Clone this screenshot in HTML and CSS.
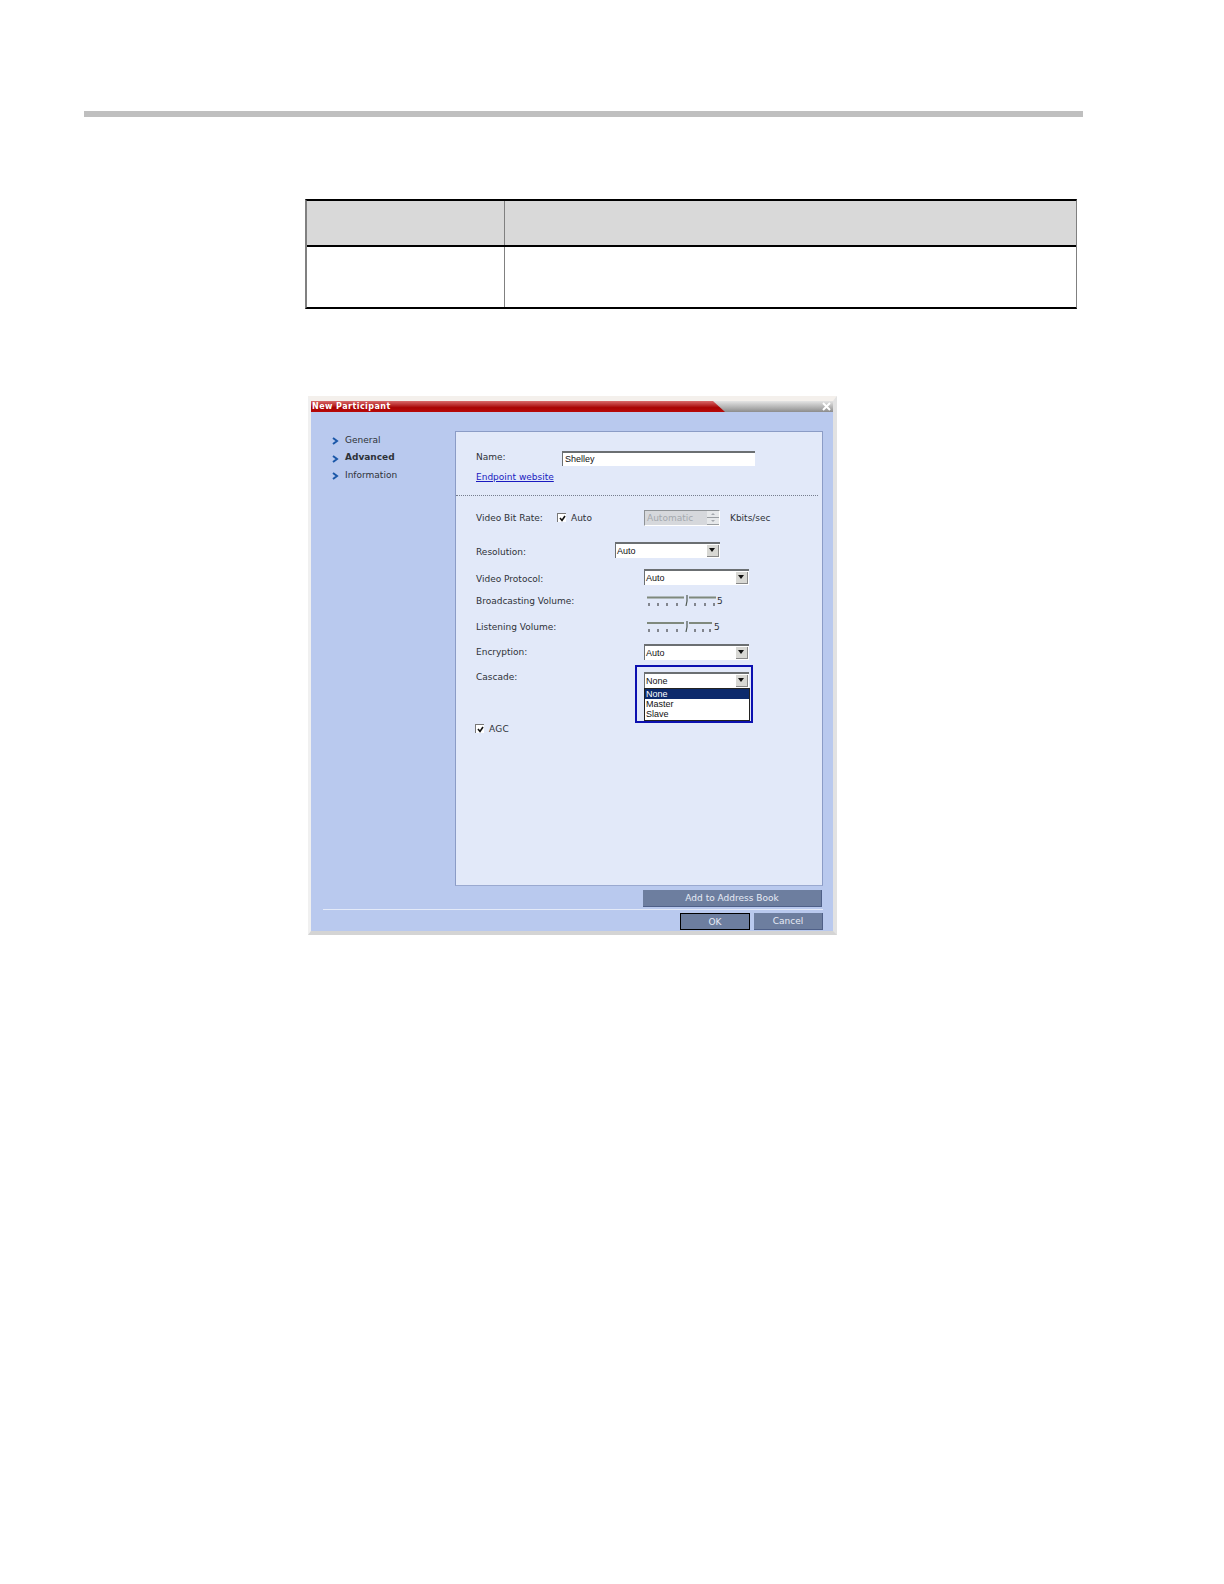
FILE: index.html
```html
<!DOCTYPE html>
<html lang="en">
<head>
    <meta charset="UTF-8">
    <title>New Participant</title>
    <link rel="stylesheet" href="styles.css">
</head>
<body>
    <div class="top-rule"></div>

    <div class="doc-table">
        <div class="doc-head">
            <div class="doc-col-a"></div>
            <div class="doc-col-b"></div>
        </div>
        <div class="doc-row">
            <div class="doc-col-a"></div>
            <div class="doc-col-b"></div>
        </div>
    </div>

    <div class="dialog">
        <div class="title-bar">
            <div class="title-red">New Participant</div>
            <svg class="title-close" width="9" height="9" viewBox="0 0 9 9"><path d="M1 1l7 7M8 1l-7 7" stroke="#fff" stroke-width="2"/></svg>
        </div>

        <div class="dialog-main">
            <ul class="side-nav">
                <li><svg class="chev" width="7" height="8" viewBox="0 0 7 8"><path d="M1 1l4 3-4 3" fill="none" stroke="#1a57a8" stroke-width="2"/></svg>General</li>
                <li class="active"><svg class="chev" width="7" height="8" viewBox="0 0 7 8"><path d="M1 1l4 3-4 3" fill="none" stroke="#1a57a8" stroke-width="2"/></svg>Advanced</li>
                <li><svg class="chev" width="7" height="8" viewBox="0 0 7 8"><path d="M1 1l4 3-4 3" fill="none" stroke="#1a57a8" stroke-width="2"/></svg>Information</li>
            </ul>

            <div class="panel">
                <div class="panel-top">
                    <div class="name-row">
                        <span class="name-label">Name:</span>
                        <div class="text-input">Shelley</div>
                    </div>
                    <a class="endpoint-link" href="#">Endpoint website</a>
                </div>

                <div class="row bitrate-row">
                    <span class="bitrate-label">Video Bit Rate:</span>
                    <span class="check"><svg width="7" height="7" viewBox="0 0 7 7"><path d="M1 3l2 2.500 3-4.500" fill="none" stroke="#111" stroke-width="1.600"/></svg></span>
                    <span class="auto-label">Auto</span>
                    <div class="spinner">
                        <span class="spinner-text">Automatic</span>
                        <span class="spinner-btns"><i class="spin-up"></i><i class="spin-down"></i></span>
                    </div>
                    <span class="unit">Kbits/sec</span>
                </div>

                <div class="row resolution-row">
                    <span class="short-label low-label">Resolution:</span>
                    <div class="select"><span>Auto</span><b class="drop-btn"></b></div>
                </div>

                <div class="row protocol-row">
                    <span class="label low-label">Video Protocol:</span>
                    <div class="select"><span>Auto</span><b class="drop-btn"></b></div>
                </div>

                <div class="row broadcast-row">
                    <span class="label">Broadcasting Volume:</span>
                    <svg class="slider" width="72" height="15" viewBox="0 0 72 15">
                        <path d="M3 4.500h37M45 4.500h27" stroke="#7f897d" stroke-width="2"/>
                        <path d="M5 10v3M14 10v3M23 10v3M33 10v3M51 10v3M61 10v3M70 10v3" stroke="#222" stroke-width="1"/>
                        <path d="M43 2v6l-1 5" fill="none" stroke="#4e5850" stroke-width="1.200"/>
                    </svg>
                    <span class="slider-val">5</span>
                </div>

                <div class="row listen-row">
                    <span class="label">Listening Volume:</span>
                    <svg class="slider" width="68" height="15" viewBox="0 0 68 15">
                        <path d="M3 4h37M45 4h23" stroke="#7f897d" stroke-width="2"/>
                        <path d="M5 10v3M14 10v3M23 10v3M33 10v3M51 10v3M59 10v3M66 10v3" stroke="#222" stroke-width="1"/>
                        <path d="M43 2v6l-1 5" fill="none" stroke="#4e5850" stroke-width="1.200"/>
                    </svg>
                    <span class="slider-val">5</span>
                </div>

                <div class="row encryption-row">
                    <span class="label">Encryption:</span>
                    <div class="select"><span>Auto</span><b class="drop-btn"></b></div>
                </div>

                <div class="row cascade-row">
                    <span class="label cascade-label">Cascade:</span>
                    <div class="select cascade-select">
                        <span>None</span><b class="drop-btn"></b>
                        <div class="callout"></div>
                        <ul class="drop-list">
                            <li class="selected">None</li>
                            <li>Master</li>
                            <li>Slave</li>
                        </ul>
                    </div>
                </div>

                <div class="row agc-row">
                    <span class="check"><svg width="7" height="7" viewBox="0 0 7 7"><path d="M1 3l2 2.500 3-4.500" fill="none" stroke="#111" stroke-width="1.600"/></svg></span>
                    <span class="agc-label">AGC</span>
                </div>
            </div>
        </div>

        <div class="address-row">
            <div class="btn btn-address">Add to Address Book</div>
        </div>
        <div class="footer">
            <div class="btn btn-ok">OK</div>
            <div class="btn btn-cancel">Cancel</div>
        </div>
    </div>
</body>
</html>
```

FILE: styles.css
```css
body {
    margin: 0;
    background-color: #fff;
    font-family: "DejaVu Sans", sans-serif;
    font-size: 9px;
    color: #2e3238;
}

.top-rule {
    height: 6px;
    margin: 111px 0 0 84px;
    width: 999px;
    background-color: #bfbfbf;
}

/* empty table above the dialog */
.doc-table {
    margin: 82px 0 0 305px;
    width: 772px;
    box-sizing: border-box;
    border-top: 2px solid #000;
    border-bottom: 2px solid #000;
    border-left: 2px solid #808080;
    border-right: 1px solid #808080;
}

.doc-head {
    display: flex;
    height: 44px;
    background-color: #d9d9d9;
    border-bottom: 2px solid #000;
}

.doc-row {
    display: flex;
    height: 60px;
}

.doc-col-a {
    width: 197px;
    border-right: 1px solid #808080;
}

.doc-col-b {
    flex: 1;
}

/* dialog */
.dialog {
    margin: 87px 0 0 308px;
    width: 529px;
    height: 539px;
    box-sizing: border-box;
    background-color: #b9c9ee;
    border-top: 5px solid #f4f0ec;
    border-left: 3px solid #f0f0f0;
    border-right: 4px solid #e2e2e2;
    border-bottom: 4px solid #d4d4d4;
}

.title-bar {
    position: relative;
    height: 11px;
    background: linear-gradient(to bottom, #e4e4e4, #a8a8a8 70%, #8c8c8c);
}

.title-red {
    width: 414px;
    height: 11px;
    line-height: 11px;
    padding-left: 1px;
    box-sizing: border-box;
    background: linear-gradient(to bottom, #d86a6a, #a80404 60%, #b80808);
    clip-path: polygon(0 0, 402px 0, 100% 100%, 0 100%);
    color: #fff;
    font-weight: bold;
    font-size: 8px;
    letter-spacing: 0.45px;
}

.title-close {
    position: absolute;
    right: 2px;
    top: 1px;
}

.dialog-main {
    display: flex;
    margin-top: 19px;
}

.side-nav {
    list-style: none;
    margin: 0;
    padding: 0 0 0 21px;
    width: 123px;
}

.side-nav li {
    display: flex;
    align-items: center;
    height: 17.500px;
}

.side-nav .active {
    font-weight: bold;
}

.chev {
    margin: 3px 6px 0 0;
}

.panel {
    width: 368px;
    height: 455px;
    box-sizing: border-box;
    background-color: #e2e9f9;
    border: 1px solid #8b9cc6;
    border-bottom-color: #9aa9d0;
}

.panel-top {
    height: 64px;
    padding: 19px 0 0 20px;
    box-sizing: border-box;
    border-bottom: 1px dotted #767e8e;
    margin-right: 4px;
}

.name-row {
    display: flex;
    align-items: center;
    height: 15px;
}

.name-label {
    width: 86px;
    margin-top: -4px;
}

.text-input {
    width: 193px;
    height: 15px;
    box-sizing: border-box;
    padding-left: 2px;
    line-height: 13px;
    background-color: #fff;
    border-top: 2px solid #6b6f72;
    border-left: 1px solid #6b6f72;
    font-family: "Liberation Sans", sans-serif;
    font-size: 9px;
    color: #111;
}

.endpoint-link {
    display: block;
    margin-top: 6px;
    color: #1a1ac0;
}

.row {
    display: flex;
    align-items: center;
    height: 15px;
    padding-left: 20px;
}

.bitrate-row { margin-top: 14px; }
.resolution-row { margin-top: 17px; }
.protocol-row { margin-top: 12px; }
.broadcast-row { margin-top: 9px; }
.listen-row { margin-top: 11px; }
.encryption-row { margin-top: 10px; }
.cascade-row { margin-top: 13px; }
.agc-row { margin-top: 34px; padding-left: 19px; }

.label {
    width: 168px;
}

.short-label {
    width: 139px;
}

.low-label {
    margin-top: 4px;
}

.cascade-label {
    margin-top: -5px;
}

.bitrate-label {
    width: 81px;
}

.check {
    display: flex;
    align-items: center;
    justify-content: center;
    width: 8px;
    height: 8px;
    background-color: #fff;
    border-top: 1px solid #777;
    border-left: 1px solid #777;
}

.auto-label {
    width: 73px;
    margin-left: 5px;
}

.agc-label {
    margin-left: 5px;
    letter-spacing: 0.3px;
}

.spinner {
    display: flex;
    align-items: center;
    justify-content: space-between;
    width: 76px;
    height: 16px;
    box-sizing: border-box;
    padding-left: 2px;
    background-color: #d6d8dc;
    border-top: 1px solid #8e9296;
    border-left: 1px solid #8e9296;
    border-right: 1px solid #fff;
    border-bottom: 1px solid #fff;
    color: #a4a8ae;
}

.spinner-btns {
    display: flex;
    flex-direction: column;
    width: 12px;
    height: 14px;
}

.spinner-btns i {
    position: relative;
    flex: 1;
    background-color: #e6e8ea;
    border-bottom: 1px solid #9a9ea2;
}

.spinner-btns i::after {
    content: "";
    position: absolute;
    left: 4px;
    top: 2px;
    border-left: 2px solid transparent;
    border-right: 2px solid transparent;
}

.spin-up::after {
    border-bottom: 2px solid #a4a8ae;
}

.spin-down::after {
    border-top: 2px solid #a4a8ae;
}

.unit {
    margin-left: 10px;
}

.select {
    position: relative;
    display: flex;
    align-items: center;
    justify-content: space-between;
    width: 105px;
    height: 16px;
    box-sizing: border-box;
    padding-left: 1px;
    background-color: #fff;
    border-top: 2px solid #6b6f72;
    border-left: 1px solid #6b6f72;
    font-family: "Liberation Sans", sans-serif;
    font-size: 9px;
    color: #111;
}

.drop-btn {
    position: relative;
    width: 12px;
    height: 12px;
    margin-right: 1px;
    background-color: #d8d8d4;
    border-right: 1px solid #888;
    border-bottom: 1px solid #888;
    box-sizing: border-box;
}

.drop-btn::after {
    content: "";
    position: absolute;
    left: 2px;
    top: 3px;
    border-left: 3px solid transparent;
    border-right: 3px solid transparent;
    border-top: 4px solid #111;
}

.slider {
    display: block;
}

.slider-val {
    margin-left: 1px;
}

.listen-row .slider-val {
    margin-left: 2px;
}

/* blue highlight drawn over the screenshot */
.callout {
    position: absolute;
    left: -10px;
    top: -9px;
    width: 118px;
    height: 58px;
    box-sizing: border-box;
    border: 2px solid #0c10b0;
}

.drop-list {
    position: absolute;
    left: -1px;
    top: 14px;
    width: 106px;
    height: 33px;
    box-sizing: border-box;
    margin: 0;
    padding: 0;
    list-style: none;
    background-color: #fff;
    border: 1px solid #222;
    line-height: 10px;
}

.drop-list li {
    padding-left: 1px;
}

.drop-list .selected {
    background-color: #0c2a6c;
    color: #fff;
}

.address-row {
    display: flex;
    justify-content: flex-end;
    margin-top: 4px;
    padding-right: 11px;
}

.footer {
    display: flex;
    justify-content: flex-end;
    gap: 4px;
    margin: 2px 10px 0 12px;
    padding-top: 3px;
    border-top: 1px solid #e4eaf8;
}

.btn {
    display: flex;
    align-items: center;
    justify-content: center;
    height: 17px;
    box-sizing: border-box;
    background-color: #6d7e9f;
    color: #e6ebf5;
    border-right: 1px solid #4f6088;
    border-bottom: 1px solid #4f6088;
}

.btn-address {
    width: 179px;
}

.btn-ok {
    width: 70px;
    border: 1px solid #000;
}

.btn-cancel {
    width: 69px;
}
```
